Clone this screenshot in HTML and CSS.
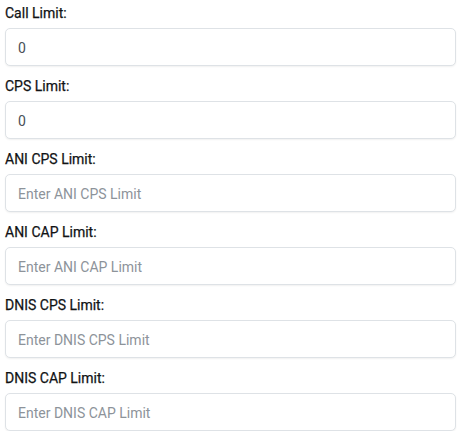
FILE: index.html
```html
<!DOCTYPE html>
<html lang="en">
<head>
<meta charset="utf-8">
<link rel="stylesheet" href="styles.css">
</head>
<body>
<form class="limits">
  <div class="field">
    <label class="label" for="call">Call Limit:</label>
    <input class="input" id="call" type="text" value="0">
  </div>
  <div class="field">
    <label class="label" for="cps">CPS Limit:</label>
    <input class="input" id="cps" type="text" value="0">
  </div>
  <div class="field">
    <label class="label" for="anicps">ANI CPS Limit:</label>
    <input class="input" id="anicps" type="text" placeholder="Enter ANI CPS Limit">
  </div>
  <div class="field">
    <label class="label" for="anicap">ANI CAP Limit:</label>
    <input class="input" id="anicap" type="text" placeholder="Enter ANI CAP Limit">
  </div>
  <div class="field">
    <label class="label" for="dniscps">DNIS CPS Limit:</label>
    <input class="input" id="dniscps" type="text" placeholder="Enter DNIS CPS Limit">
  </div>
  <div class="field">
    <label class="label" for="dniscap">DNIS CAP Limit:</label>
    <input class="input" id="dniscap" type="text" placeholder="Enter DNIS CAP Limit">
  </div>
</form>
</body>
</html>
```
FILE: styles.css
```css
* { box-sizing: border-box; }
html, body { margin: 0; padding: 0; background: #fff; }
body {
  font-family: Roboto, "Liberation Sans", sans-serif;
  color: #212529;
}
.limits {
  display: flex;
  flex-direction: column;
  gap: 10px;
  padding: 3px 4px 0 5px;
}
.field {
  display: flex;
  flex-direction: column;
  gap: 4px;
}
.label {
  font-size: 14px;
  font-weight: 400;
  line-height: 21px;
  color: #111315;
  -webkit-text-stroke: 0.25px #111315;
}
.input {
  display: block;
  width: 100%;
  height: 38px;
  padding: 2px 12px 0;
  font-family: inherit;
  font-size: 14px;
  color: #495057;
  background: #fff;
  border: 1px solid #dee2e6;
  border-radius: 5px;
  box-shadow: 0 1px 2px rgba(0, 0, 0, 0.06);
  outline: none;
}
.input::placeholder {
  color: #8d939a;
  opacity: 1;
}
```
